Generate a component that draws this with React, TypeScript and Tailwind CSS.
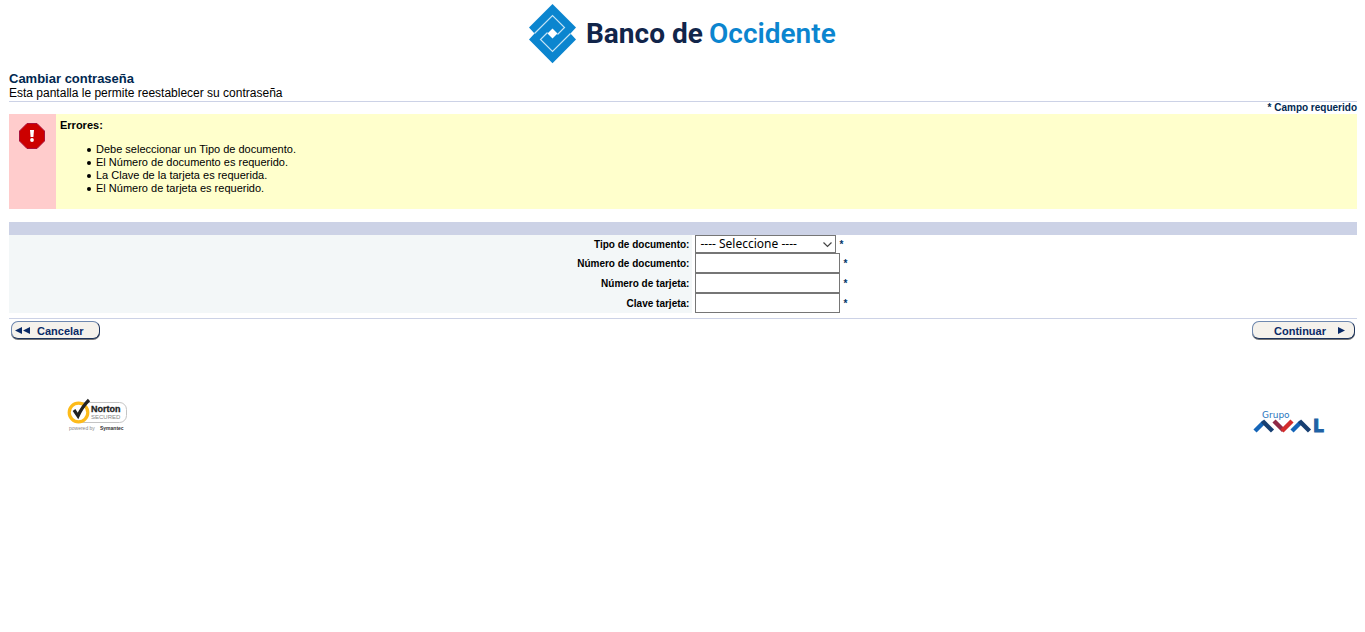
import React from "react";

const errors = [
  "Debe seleccionar un Tipo de documento.",
  "El Número de documento es requerido.",
  "La Clave de la tarjeta es requerida.",
  "El Número de tarjeta es requerido.",
];

const fields = [
  { id: "numero-documento", label: "Número de documento:", type: "text" },
  { id: "numero-tarjeta", label: "Número de tarjeta:", type: "text" },
  { id: "clave-tarjeta", label: "Clave tarjeta:", type: "password" },
];

function BankLogo() {
  return (
    <svg width="308" height="60" viewBox="0 0 308 60" className="overflow-visible" role="img" aria-label="Banco de Occidente">
      <path d="M23.500 0 47 23.500 41.500 29.500 47 35.500 23.500 59.300 0 35.500 5.500 29.500 0 23.500Z" fill="#0b85cf" />
      <path
        d="M5.500 29.500 23.500 11.500 35.500 23.500 28.500 30.500M41.500 29.500 23.500 47.500 11.500 35.500 18.500 28.500"
        fill="none"
        stroke="#c4e3f5"
        strokeWidth="1.200"
      />
      <path d="M23.500 24.500 28.500 29.500 23.500 34.500 18.500 29.500Z" fill="#fff" />
      <text x="57" y="39" fontFamily="Roboto, sans-serif" fontSize="28" fontWeight="700" fill="#11254a">
        Banco de
      </text>
      <text x="180" y="39" fontFamily="Roboto, sans-serif" fontSize="28" fontWeight="600" fill="#0b85cf">
        Occidente
      </text>
    </svg>
  );
}

function ErrorIcon() {
  return (
    <svg width="26" height="26" viewBox="0 0 26 26" aria-hidden="true">
      <path d="M8 .5h10L25.500 8v10L18 25.500H8L.5 18V8Z" fill="#cc0000" stroke="#a8123c" />
      <path d="M11 7h4l-.6 7h-2.800Z" fill="#fff" />
      <circle cx="13" cy="17" r="1.900" fill="#fff" />
    </svg>
  );
}

function NortonLogo() {
  return (
    <svg width="62" height="36" viewBox="0 0 62 36" role="img" aria-label="Norton Secured powered by Symantec">
      <rect x="10" y="4.500" width="49.500" height="20" rx="7" fill="#fff" stroke="#c4c4c4" />
      <circle cx="11.500" cy="14.500" r="9.300" fill="#fff" stroke="#fdbb1a" strokeWidth="3.200" />
      <path d="M7 12 11 18Q15 9 22 2" fill="none" stroke="#222" strokeWidth="3.200" />
      <text x="24" y="14" fontFamily="'Liberation Sans', sans-serif" fontSize="9" fontWeight="700" fill="#222" stroke="#222" strokeWidth="0.3">Norton</text>
      <text x="24" y="21" fontFamily="'Liberation Sans', sans-serif" fontSize="6" fill="#888">SECURED</text>
      <text x="2" y="32" fontFamily="'Liberation Sans', sans-serif" fontSize="5" fill="#888">powered by</text>
      <text x="33" y="32" fontFamily="'Liberation Sans', sans-serif" fontSize="5" fontWeight="700" fill="#333">Symantec</text>
    </svg>
  );
}

function AvalLogo() {
  return (
    <svg width="74" height="24" viewBox="0 0 74 24" className="overflow-visible" role="img" aria-label="Grupo Aval">
      <text x="9" y="8" fontFamily="'DejaVu Sans', sans-serif" fontSize="9" fill="#2674bd">Grupo</text>
      <g fill="none" strokeWidth="4.400">
        <path d="M2 21 11 12" stroke="#1565b8" />
        <path d="M9.500 11 19.500 21" stroke="#173f72" />
        <path d="M21 11 30.500 20.500" stroke="#8e2947" />
        <path d="M29 21 39 11" stroke="#d32c2c" />
        <path d="M39 21 48 12" stroke="#1565b8" />
        <path d="M46.500 11 56.500 21" stroke="#173f72" />
      </g>
      <text x="60" y="22" fontFamily="'DejaVu Sans', sans-serif" fontSize="17" fontWeight="700" fill="#1f62a5" stroke="#1f62a5">L</text>
    </svg>
  );
}

function Required() {
  return <span className="ml-[3px] text-[10px] font-bold text-[#003366]">*</span>;
}

const labelCell = "w-[50.7%] bg-[#f3f7f8] p-0 pt-[2px] pr-[3px] text-right text-[10px] font-bold leading-3";
const button =
  "flex h-[18px] cursor-pointer items-center rounded-[7px] border border-[#6f89b0] border-r-[#1c335c] border-b-[#1c335c] bg-[#f5f2ec] pt-px text-[11px] leading-3 font-bold text-[#0a2a66] shadow-[0_1px_0_#777]";

export default function App() {
  return (
    <div className="bg-white pr-2 pl-[9px] font-['Liberation_Sans',Arial,sans-serif] text-black">
      <header className="flex justify-center pt-1 pb-[7px]">
        <BankLogo />
      </header>
      <main>
        <div className="border-b border-[#ccd2e6]">
          <h1 className="text-[13px] leading-[15px] font-bold text-[#002850]">Cambiar contraseña</h1>
          <p className="text-[12px] leading-[15px]">Esta pantalla le permite reestablecer su contraseña</p>
        </div>
        <p className="text-right text-[10px] leading-3 font-bold text-[#002850]">* Campo requerido</p>

        <section className="flex bg-[#ffffcc]" role="alert">
          <div className="flex w-[47px] justify-center bg-[#ffcccc] pt-[9px] pr-px">
            <ErrorIcon />
          </div>
          <div className="pt-[5px] pb-[14px] pl-1">
            <h2 className="text-[11px] leading-[13px] font-bold">Errores:</h2>
            <ul className="mt-[11px] pl-[27px] text-[11px] leading-[13px]">
              {errors.map((error) => (
                <li
                  key={error}
                  className="flex items-center gap-[5px] before:h-1 before:w-1 before:rounded-full before:bg-black before:content-['']"
                >
                  {error}
                </li>
              ))}
            </ul>
          </div>
        </section>

        <form onSubmit={(event) => event.preventDefault()}>
          <div className="mt-[13px] h-[13px] bg-[#ccd2e6]" />
          <table className="w-full border-collapse">
            <tbody>
              <tr className="h-[18px]">
                <th scope="row" className={labelCell}>
                  <label htmlFor="tipo-documento">Tipo de documento:</label>
                </th>
                <td className="p-0 pl-[3px]">
                  <div className="flex items-center">
                    <div className="relative">
                      <select
                        id="tipo-documento"
                        className="block h-[18px] w-[141px] appearance-none border border-[#767676] bg-white pl-1 font-['Noto_Sans',sans-serif] text-[12px] leading-4"
                      >
                        <option>---- Seleccione ----</option>
                      </select>
                      <svg
                        className="pointer-events-none absolute top-[7px] right-1"
                        width="9"
                        height="6"
                        viewBox="0 0 9 6"
                        aria-hidden="true"
                      >
                        <path d="M.5.500 4.500 4.500 8.500.5" fill="none" stroke="#444" strokeWidth="1.200" />
                      </svg>
                    </div>
                    <Required />
                  </div>
                </td>
              </tr>
              {fields.map((field) => (
                <tr key={field.id} className="h-5">
                  <th scope="row" className={labelCell}>
                    <label htmlFor={field.id}>{field.label}</label>
                  </th>
                  <td className="p-0 pl-[3px]">
                    <div className="flex items-center">
                      <input
                        id={field.id}
                        type={field.type}
                        className="block h-5 w-[145px] border border-[#767676] bg-white px-1 text-[12px]"
                      />
                      <Required />
                    </div>
                  </td>
                </tr>
              ))}
            </tbody>
          </table>
          <div className="mt-[5px] flex justify-between border-t border-[#ccd2e6] px-[2px] pt-[2px]">
            <button type="button" className={`${button} w-[89px] gap-[7px] pl-[3px]`}>
              <svg width="15" height="7" viewBox="0 0 15 7" fill="#0a2a66" aria-hidden="true">
                <path d="M7 0v7L0 3.500ZM15 0v7L8 3.500Z" />
              </svg>
              Cancelar
            </button>
            <button type="submit" className={`${button} w-[103px] justify-end gap-3 pr-[9px]`}>
              Continuar
              <svg width="7" height="7" viewBox="0 0 7 7" fill="#0a2a66" aria-hidden="true">
                <path d="M0 0v7L7 3.500Z" />
              </svg>
            </button>
          </div>
        </form>
      </main>
      <footer className="mt-[59px] flex items-end justify-between pr-[30px] pl-[58px]">
        <NortonLogo />
        <AvalLogo />
      </footer>
    </div>
  );
}
